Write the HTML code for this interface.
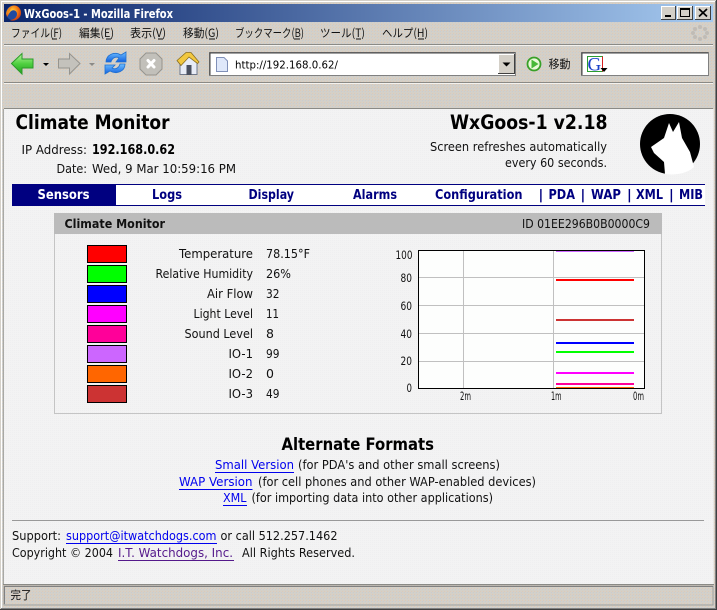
<!DOCTYPE html>
<html><head><meta charset="utf-8"><title>WxGoos-1 - Mozilla Firefox</title>
<style>
html,body{margin:0;padding:0;width:717px;height:610px;overflow:hidden;background:#d4d0c8}
svg{display:block}
text{font-family:"DejaVu Sans","Noto Sans CJK JP",sans-serif;font-size:12.5px;fill:#111;white-space:pre}
.b{font-weight:bold;fill:#000}
.n{font-weight:bold;font-size:13px;fill:#000080}
.j{font-family:"Noto Sans CJK JP","DejaVu Sans",sans-serif;font-size:11.5px;fill:#111}
.l{fill:#0000ee}
.c{font-size:11.5px;fill:#111}
</style></head><body>
<svg width="717" height="610" viewBox="0 0 717 610" xmlns="http://www.w3.org/2000/svg">
<defs>
<linearGradient id="tb" x1="0" x2="1" y1="0" y2="0"><stop offset="0" stop-color="#0a246a"/><stop offset="1" stop-color="#a6caf0"/></linearGradient>
<radialGradient id="ff" cx=".4" cy=".35" r=".7"><stop offset="0" stop-color="#ffd040"/><stop offset=".6" stop-color="#f07010"/><stop offset="1" stop-color="#c03010"/></radialGradient>
<linearGradient id="gr" x1="0" x2="0" y1="0" y2="1"><stop offset="0" stop-color="#b8f5a0"/><stop offset=".5" stop-color="#50d040"/><stop offset="1" stop-color="#20a020"/></linearGradient>
<linearGradient id="blu" x1="0" x2="0" y1="0" y2="1"><stop offset="0" stop-color="#70c0ff"/><stop offset="1" stop-color="#1060e0"/></linearGradient>
<pattern id="dc" width="3" height="3" patternUnits="userSpaceOnUse"><rect width="3" height="3" fill="#d4d0c8"/><rect width="1" height="1" fill="#dcc9b8"/><rect x="2" y="1" width="1" height="1" fill="#c8ccd0"/></pattern>
<pattern id="dp" width="2" height="2" patternUnits="userSpaceOnUse"><rect width="2" height="2" fill="#f3f3f3"/><rect width="1" height="1" fill="#efeff0"/></pattern>
</defs>

<!-- window frame and chrome -->
<rect width="717" height="610" fill="url(#dc)"/>
<rect x="0" y="0" width="717" height="1" fill="#d4d0c8"/>
<rect x="1" y="1" width="715" height="1" fill="#fff"/>
<rect x="0" y="0" width="1" height="610" fill="#d4d0c8"/>
<rect x="1" y="1" width="1" height="608" fill="#fff"/>
<rect x="716" y="0" width="1" height="610" fill="#404040"/>
<rect x="715" y="1" width="1" height="608" fill="#808080"/>
<rect x="0" y="609" width="717" height="1" fill="#404040"/>
<rect x="1" y="608" width="715" height="1" fill="#808080"/>

<!-- title bar -->
<rect x="4" y="4" width="709" height="18" fill="url(#tb)"/>
<circle cx="13.5" cy="13" r="7.5" fill="#1f4aa0"/>
<path d="M7 17C5 10 10 5 15 5.500C19 6 21.500 10 21 14C20 19 14 22 10 20C13 20 17 18 17 14C17 11 14 9.500 12 10.500C10 11.500 9 14 7 17Z" fill="url(#ff)"/>
<path d="M6 15C6 10 9 6.500 13 6C11 8 10 9 10 11C8 12 7 13 6 15Z" fill="#f08a18"/>
<text x="24" y="18" class="b" style="fill:#fff;font-size:12.5px" textLength="149" lengthAdjust="spacingAndGlyphs">WxGoos-1 - Mozilla Firefox</text>
<!-- window buttons -->
<g>
<rect x="661" y="6" width="15" height="14" fill="#d4d0c8"/><path d="M661.500 20V6.500H676" fill="none" stroke="#fff"/><path d="M661 19.500H675.500V6" fill="none" stroke="#404040"/>
<rect x="665" y="15" width="6" height="2" fill="#000"/>
<rect x="677" y="6" width="16" height="14" fill="#d4d0c8"/><path d="M677.500 20V6.500H693" fill="none" stroke="#fff"/><path d="M677 19.500H692.500V6" fill="none" stroke="#404040"/>
<rect x="680.500" y="8.500" width="9" height="8" fill="none" stroke="#000"/><rect x="680" y="8" width="10" height="2" fill="#000"/>
<rect x="695" y="6" width="16" height="14" fill="#d4d0c8"/><path d="M695.500 20V6.500H711" fill="none" stroke="#fff"/><path d="M695 19.500H710.500V6" fill="none" stroke="#404040"/>
<path d="M699 9L707 16.500M707 9L699 16.500" stroke="#000" stroke-width="1.700"/>
</g>

<!-- menu -->
<text x="11" y="37" class="j" textLength="51" lengthAdjust="spacingAndGlyphs">ファイル(F)</text>
<text x="79" y="37" class="j" textLength="35" lengthAdjust="spacingAndGlyphs">編集(E)</text>
<text x="130" y="37" class="j" textLength="36" lengthAdjust="spacingAndGlyphs">表示(V)</text>
<text x="183" y="37" class="j" textLength="36" lengthAdjust="spacingAndGlyphs">移動(G)</text>
<text x="235" y="37" class="j" textLength="69" lengthAdjust="spacingAndGlyphs">ブックマーク(B)</text>
<text x="320" y="37" class="j" textLength="45" lengthAdjust="spacingAndGlyphs">ツール(T)</text>
<text x="382" y="37" class="j" textLength="46" lengthAdjust="spacingAndGlyphs">ヘルプ(H)</text>
<path d="M52 39h5M106 39h5M158 39h5M209 39h6M294 39h6M356 39h5M418 39h6" stroke="#111"/>
<g fill="#c0bcb6"><circle cx="700" cy="27" r="2"/><circle cx="705" cy="29" r="2"/><circle cx="707" cy="33" r="2"/><circle cx="705" cy="37" r="2"/><circle cx="700" cy="39" r="2"/><circle cx="695" cy="37" r="2"/><circle cx="693" cy="33" r="2"/><circle cx="695" cy="29" r="2"/></g>
<rect x="4" y="44" width="709" height="1" fill="#8a8a86"/><rect x="4" y="45" width="709" height="1" fill="#f4f2ee"/>

<!-- toolbar icons -->
<path d="M11.500 63.500L22 53.500V59H33V68H22V74Z" fill="url(#gr)" stroke="#2c9a28"/>
<path d="M43 63h6l-3 3z" fill="#000"/>
<path d="M80 63.500L69.500 53.500V59H58.500V68H69.500V74Z" fill="#c4c2bc" stroke="#96948e"/>
<path d="M89 63h6l-3 3z" fill="#8c8a86"/>
<path d="M106 62C106 55 114 51 121 55L126 52V62H116L119 58C116 56 112 58 111 62Z" fill="url(#blu)" stroke="#2070d0" stroke-width=".8"/>
<path d="M125 64C125 71 117 75 110 71L105 74V65H115L112 68C115 70 119 68 120 64Z" fill="url(#blu)" stroke="#2070d0" stroke-width=".8"/>
<path d="M146 53H156L162 59V69L156 75H146L140 69V59Z" fill="#c2c0ba" stroke="#96948e"/>
<path d="M148 60.500L154 67M154 60.500L148 67" stroke="#fff" stroke-width="3" stroke-linecap="round"/>
<path d="M180 63V74.500H197V63L189 56Z" fill="#e8ecf6" stroke="#70788a"/>
<rect x="186.500" y="65" width="5" height="10" fill="#4a5060"/>
<path d="M177 60.500L186 52.500H191L199 62L197.500 63.500L189 57L181 65.500Z" fill="#f2c840" stroke="#8a6e20" stroke-width=".8"/>

<!-- url bar -->
<rect x="209.500" y="52.500" width="306" height="23" fill="#fff" stroke="#808080"/>
<path d="M210 75V53H515" fill="none" stroke="#404040"/>
<path d="M216.500 57.500H224L227.500 61V71.500H216.500Z" fill="#dfe8fa" stroke="#8090b8"/>
<text x="235" y="68.500" style="font-size:11px;fill:#000" textLength="103" lengthAdjust="spacingAndGlyphs">http://192.168.0.62/</text>
<rect x="498" y="54" width="16" height="20" fill="#d4d0c8"/><path d="M498.500 74V54.500H514" fill="none" stroke="#fff"/><path d="M498 73.500H514.500V54" fill="none" stroke="#404040"/>
<path d="M502.500 62.500h8l-4 4z" fill="#000"/>
<circle cx="534" cy="64" r="6.500" fill="#e8f8d8" stroke="#38a028" stroke-width="1.800"/>
<path d="M531.500 59.500L538.500 64L531.500 68.500Z" fill="#48b838"/>
<text x="548.500" y="68" class="j" textLength="22" lengthAdjust="spacingAndGlyphs">移動</text>
<rect x="581.500" y="52.500" width="127" height="23" fill="#fff" stroke="#808080"/>
<path d="M582 75V53H708" fill="none" stroke="#404040"/>
<rect x="587.500" y="56.500" width="15" height="15" fill="#fff" stroke="#2a9c30"/>
<path d="M602.500 56.500V71.500" stroke="#d82020"/>
<text x="587.500" y="70.500" style="font-family:'Liberation Serif',serif;font-size:19px;fill:#1840c8">G</text>
<path d="M600.500 68h7l-3.500 4z" fill="#000"/>
<rect x="4" y="82" width="709" height="1" fill="#8a8a86"/><rect x="4" y="83" width="709" height="1" fill="#f4f2ee"/>
<rect x="4" y="108" width="709" height="1" fill="#8a8a86"/>

<!-- content -->
<rect x="3" y="109" width="711" height="475" fill="url(#dp)"/>
<rect x="3" y="109" width="1" height="475" fill="#a8a8a4"/>
<rect x="713" y="109" width="1" height="475" fill="#e8e8e4"/>

<text x="15.500" y="129" class="b" style="font-size:19.500px" textLength="154" lengthAdjust="spacingAndGlyphs">Climate Monitor</text>
<text x="21.500" y="154" textLength="65.500" lengthAdjust="spacingAndGlyphs">IP Address:</text>
<text x="92" y="154" class="b" style="font-size:13.500px" textLength="83" lengthAdjust="spacingAndGlyphs">192.168.0.62</text>
<text x="56.500" y="173" textLength="30.500" lengthAdjust="spacingAndGlyphs">Date:</text>
<text x="92" y="173" textLength="144" lengthAdjust="spacingAndGlyphs">Wed, 9 Mar 10:59:16 PM</text>

<text x="450" y="129" class="b" style="font-size:19.500px" textLength="157.500" lengthAdjust="spacingAndGlyphs">WxGoos-1 v2.18</text>
<text x="430" y="151" textLength="177" lengthAdjust="spacingAndGlyphs">Screen refreshes automatically</text>
<text x="505" y="167" textLength="102" lengthAdjust="spacingAndGlyphs">every 60 seconds.</text>

<circle cx="670" cy="144" r="30" fill="#000"/>
<path d="M665 174L664 162L654 153L651 147L664 138L669 123L673 132L679 122L682 138L690 152L694 167C690 171 680 176 665 174Z" fill="#fff"/>

<!-- nav -->
<rect x="12" y="184" width="693" height="22" fill="#fff"/>
<rect x="12" y="184" width="693" height="1" fill="#000080"/>
<rect x="12" y="205" width="693" height="1" fill="#000080"/>
<rect x="12" y="184" width="104" height="22" fill="#000080"/>
<text x="37.500" y="199" class="n" style="fill:#fff" textLength="52" lengthAdjust="spacingAndGlyphs">Sensors</text>
<text x="152" y="199" class="n" textLength="30" lengthAdjust="spacingAndGlyphs">Logs</text>
<text x="248.500" y="199" class="n" textLength="45.500" lengthAdjust="spacingAndGlyphs">Display</text>
<text x="353" y="199" class="n" textLength="44" lengthAdjust="spacingAndGlyphs">Alarms</text>
<text x="435" y="199" class="n" textLength="87.500" lengthAdjust="spacingAndGlyphs">Configuration</text>
<text x="538.500" y="199" class="n">|</text>
<text x="548.500" y="199" class="n" textLength="26.500" lengthAdjust="spacingAndGlyphs">PDA</text>
<text x="580.500" y="199" class="n">|</text>
<text x="591" y="199" class="n" textLength="30" lengthAdjust="spacingAndGlyphs">WAP</text>
<text x="627" y="199" class="n">|</text>
<text x="636" y="199" class="n" textLength="27" lengthAdjust="spacingAndGlyphs">XML</text>
<text x="669" y="199" class="n">|</text>
<text x="679" y="199" class="n" textLength="24" lengthAdjust="spacingAndGlyphs">MIB</text>

<!-- panel -->
<rect x="54.500" y="213.500" width="607" height="200" fill="none" stroke="#c4c4c4"/>
<rect x="54" y="213" width="608" height="21" fill="#bbbbbb"/>
<text x="64.500" y="228" class="b" style="font-size:12.500px;fill:#111" textLength="100.500" lengthAdjust="spacingAndGlyphs">Climate Monitor</text>
<text x="522" y="228" textLength="128" lengthAdjust="spacingAndGlyphs">ID 01EE296B0B0000C9</text>

<g stroke="#000" stroke-width="1">
<rect x="87.500" y="245.500" width="39" height="17" fill="#ff0000"/>
<rect x="87.500" y="265.500" width="39" height="17" fill="#00ff00"/>
<rect x="87.500" y="285.500" width="39" height="17" fill="#0000ff"/>
<rect x="87.500" y="305.500" width="39" height="17" fill="#ff00ff"/>
<rect x="87.500" y="325.500" width="39" height="17" fill="#ff0099"/>
<rect x="87.500" y="345.500" width="39" height="17" fill="#cc66ff"/>
<rect x="87.500" y="365.500" width="39" height="17" fill="#ff6600"/>
<rect x="87.500" y="385.500" width="39" height="17" fill="#cc3333"/>
</g>

<text x="179" y="258" textLength="74" lengthAdjust="spacingAndGlyphs">Temperature</text>
<text x="155.500" y="278" textLength="97.500" lengthAdjust="spacingAndGlyphs">Relative Humidity</text>
<text x="207" y="298" textLength="46" lengthAdjust="spacingAndGlyphs">Air Flow</text>
<text x="193.500" y="318" textLength="59.500" lengthAdjust="spacingAndGlyphs">Light Level</text>
<text x="184.500" y="338" textLength="68.500" lengthAdjust="spacingAndGlyphs">Sound Level</text>
<text x="228.500" y="358" textLength="24.500" lengthAdjust="spacingAndGlyphs">IO-1</text>
<text x="228.500" y="378" textLength="24.500" lengthAdjust="spacingAndGlyphs">IO-2</text>
<text x="228.500" y="398" textLength="24.500" lengthAdjust="spacingAndGlyphs">IO-3</text>
<text x="266" y="258" textLength="44" lengthAdjust="spacingAndGlyphs">78.15°F</text>
<text x="266" y="278" textLength="25" lengthAdjust="spacingAndGlyphs">26%</text>
<text x="266" y="298" textLength="13.500" lengthAdjust="spacingAndGlyphs">32</text>
<text x="266" y="318" textLength="13" lengthAdjust="spacingAndGlyphs">11</text>
<text x="266" y="338">8</text>
<text x="266" y="358" textLength="13.500" lengthAdjust="spacingAndGlyphs">99</text>
<text x="266" y="378">0</text>
<text x="266" y="398" textLength="13.500" lengthAdjust="spacingAndGlyphs">49</text>

<!-- chart -->
<rect x="418" y="250" width="226" height="138" fill="#fdfefd"/>
<path d="M463.500 250V388M553.500 250V388M418 277.500H644M418 305.500H644M418 333.500H644M418 361.500H644" stroke="#c0c0c0" fill="none"/>
<g stroke-width="2" fill="none">
<path d="M556 251H634" stroke="#cc66ff"/>
<path d="M556 280H634" stroke="#ff0000"/>
<path d="M556 320H634" stroke="#cc3333"/>
<path d="M556 343H634" stroke="#0000ff"/>
<path d="M556 352H634" stroke="#00ff00"/>
<path d="M556 373H634" stroke="#ff00ff"/>
<path d="M556 384H634" stroke="#ff0099"/>
<path d="M556 388H634" stroke="#ff6600"/>
</g>
<rect x="418.500" y="250.500" width="226" height="138" fill="none" stroke="#000"/>
<text x="395.500" y="259" class="c" textLength="17" lengthAdjust="spacingAndGlyphs">100</text>
<text x="400.500" y="282" class="c" textLength="11.500" lengthAdjust="spacingAndGlyphs">80</text>
<text x="400.500" y="310" class="c" textLength="11.500" lengthAdjust="spacingAndGlyphs">60</text>
<text x="400.500" y="338" class="c" textLength="11.500" lengthAdjust="spacingAndGlyphs">40</text>
<text x="400.500" y="365" class="c" textLength="11.500" lengthAdjust="spacingAndGlyphs">20</text>
<text x="406.500" y="392" class="c" textLength="5.500" lengthAdjust="spacingAndGlyphs">0</text>
<text x="460" y="400" class="c" textLength="11" lengthAdjust="spacingAndGlyphs">2m</text>
<text x="551" y="400" class="c" textLength="10.500" lengthAdjust="spacingAndGlyphs">1m</text>
<text x="633" y="400" class="c" textLength="11" lengthAdjust="spacingAndGlyphs">0m</text>

<!-- alternate formats -->
<text x="281.500" y="450" class="b" style="font-size:16.500px" textLength="152.500" lengthAdjust="spacingAndGlyphs">Alternate Formats</text>
<text x="215" y="469" class="l" textLength="79" lengthAdjust="spacingAndGlyphs">Small Version</text>
<rect x="215" y="472" width="79" height="1" fill="#0000ee"/>
<text x="298" y="469" textLength="202" lengthAdjust="spacingAndGlyphs">(for PDA's and other small screens)</text>
<text x="179" y="486" class="l" textLength="73.500" lengthAdjust="spacingAndGlyphs">WAP Version</text>
<rect x="179" y="489" width="73.500" height="1" fill="#0000ee"/>
<text x="258" y="486" textLength="278" lengthAdjust="spacingAndGlyphs">(for cell phones and other WAP-enabled devices)</text>
<text x="223" y="502" class="l" textLength="23.500" lengthAdjust="spacingAndGlyphs">XML</text>
<rect x="223" y="505" width="24" height="1" fill="#0000ee"/>
<text x="251.500" y="502" textLength="241.500" lengthAdjust="spacingAndGlyphs">(for importing data into other applications)</text>

<rect x="12" y="520" width="692" height="1" fill="#999"/>
<text x="12" y="540" textLength="49" lengthAdjust="spacingAndGlyphs">Support:</text>
<text x="66" y="540" class="l" textLength="150.500" lengthAdjust="spacingAndGlyphs">support@itwatchdogs.com</text>
<rect x="66" y="543" width="151" height="1" fill="#0000ee"/>
<text x="220.500" y="540" textLength="117" lengthAdjust="spacingAndGlyphs">or call 512.257.1462</text>
<text x="12" y="557" textLength="101" lengthAdjust="spacingAndGlyphs">Copyright © 2004</text>
<text x="118" y="557" style="fill:#551a8b" textLength="115" lengthAdjust="spacingAndGlyphs">I.T. Watchdogs, Inc.</text>
<rect x="118" y="560" width="116" height="1" fill="#551a8b"/>
<text x="242" y="557" textLength="113" lengthAdjust="spacingAndGlyphs">All Rights Reserved.</text>

<!-- status bar -->
<rect x="3" y="584" width="711" height="1" fill="#8a8a86"/>
<rect x="4" y="586" width="709" height="19" fill="none" stroke="#a0a09c"/>
<path d="M4.500 604V586.500H713" fill="none" stroke="#808080"/>
<text x="10.500" y="599" class="j" textLength="21" lengthAdjust="spacingAndGlyphs">完了</text>
</svg>
</body></html>
